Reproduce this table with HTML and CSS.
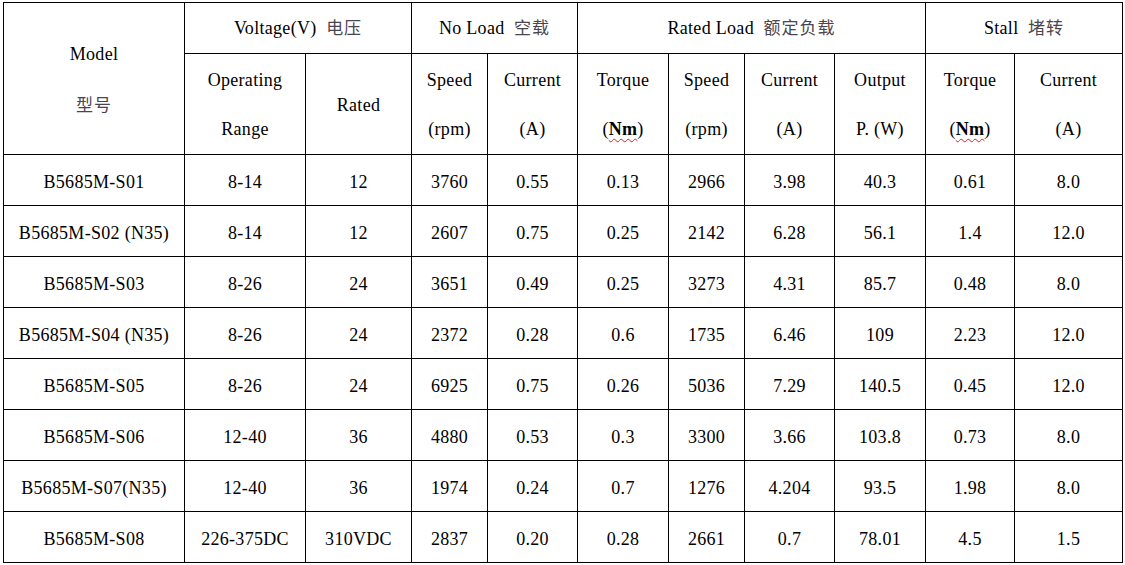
FILE: index.html
```html
<!DOCTYPE html>
<html lang="en">
<head>
<meta charset="utf-8">
<title>B5685M Motor Specifications</title>
<link rel="stylesheet" href="styles.css">
</head>
<body>
<div class="page">
<table class="spec">
  <colgroup>
    <col class="c-model">
    <col class="c-op">
    <col class="c-rated">
    <col class="c-nl-speed">
    <col class="c-nl-cur">
    <col class="c-rl-torque">
    <col class="c-rl-speed">
    <col class="c-rl-cur">
    <col class="c-rl-out">
    <col class="c-st-torque">
    <col class="c-st-cur">
  </colgroup>
  <thead>
    <tr class="head1">
      <th rowspan="2" class="two-line">Model<br><span class="cn">型号</span></th>
      <th colspan="2" class="group">Voltage(V)&nbsp;&nbsp;<span class="cn">电压</span></th>
      <th colspan="2" class="group">No Load&nbsp;&nbsp;<span class="cn">空载</span></th>
      <th colspan="4" class="group">Rated Load&nbsp;&nbsp;<span class="cn">额定负载</span></th>
      <th colspan="2" class="group">Stall&nbsp;&nbsp;<span class="cn">堵转</span></th>
    </tr>
    <tr class="head2">
      <th class="two-line">Operating<br>Range</th>
      <th>Rated</th>
      <th class="two-line">Speed<br>(rpm)</th>
      <th class="two-line">Current<br>(A)</th>
      <th class="two-line">Torque<br>(<b class="spell">Nm</b>)</th>
      <th class="two-line">Speed<br>(rpm)</th>
      <th class="two-line">Current<br>(A)</th>
      <th class="two-line">Output<br>P. (W)</th>
      <th class="two-line">Torque<br>(<b class="spell">Nm</b>)</th>
      <th class="two-line">Current<br>(A)</th>
    </tr>
  </thead>
  <tbody>
    <tr><td>B5685M-S01</td><td>8-14</td><td>12</td><td>3760</td><td>0.55</td><td>0.13</td><td>2966</td><td>3.98</td><td>40.3</td><td>0.61</td><td>8.0</td></tr>
    <tr><td>B5685M-S02 (N35)</td><td>8-14</td><td>12</td><td>2607</td><td>0.75</td><td>0.25</td><td>2142</td><td>6.28</td><td>56.1</td><td>1.4</td><td>12.0</td></tr>
    <tr><td>B5685M-S03</td><td>8-26</td><td>24</td><td>3651</td><td>0.49</td><td>0.25</td><td>3273</td><td>4.31</td><td>85.7</td><td>0.48</td><td>8.0</td></tr>
    <tr><td>B5685M-S04 (N35)</td><td>8-26</td><td>24</td><td>2372</td><td>0.28</td><td>0.6</td><td>1735</td><td>6.46</td><td>109</td><td>2.23</td><td>12.0</td></tr>
    <tr><td>B5685M-S05</td><td>8-26</td><td>24</td><td>6925</td><td>0.75</td><td>0.26</td><td>5036</td><td>7.29</td><td>140.5</td><td>0.45</td><td>12.0</td></tr>
    <tr><td>B5685M-S06</td><td>12-40</td><td>36</td><td>4880</td><td>0.53</td><td>0.3</td><td>3300</td><td>3.66</td><td>103.8</td><td>0.73</td><td>8.0</td></tr>
    <tr><td>B5685M-S07(N35)</td><td>12-40</td><td>36</td><td>1974</td><td>0.24</td><td>0.7</td><td>1276</td><td>4.204</td><td>93.5</td><td>1.98</td><td>8.0</td></tr>
    <tr><td>B5685M-S08</td><td>226-375DC</td><td>310VDC</td><td>2837</td><td>0.20</td><td>0.28</td><td>2661</td><td>0.7</td><td>78.01</td><td>4.5</td><td>1.5</td></tr>
  </tbody>
</table>
</div>
</body>
</html>
```
FILE: styles.css
```css
html, body {
  margin: 0;
  padding: 0;
  background: #ffffff;
}

.page {
  padding: 2px 0 0 3px;
}

.spec {
  border-collapse: collapse;
  table-layout: fixed;
  width: 1120px;
  font-family: "Liberation Serif", "Times New Roman", serif;
  font-size: 18px;
  letter-spacing: 0.3px;
  color: #000000;
}

.spec th,
.spec td {
  border: 1px solid #000000;
  padding: 0;
  text-align: center;
  vertical-align: middle;
  font-weight: normal;
  white-space: nowrap;
  line-height: 20px;
}

.spec td {
  padding-top: 3px;
}

.spec th {
  padding-top: 2px;
}

.spec th.group {
  padding-top: 0;
  padding-bottom: 2px;
}

.c-model { width: 181px; }
.c-op { width: 121px; }
.c-rated { width: 106px; }
.c-nl-speed { width: 76px; }
.c-nl-cur { width: 90px; }
.c-rl-torque { width: 91px; }
.c-rl-speed { width: 76px; }
.c-rl-cur { width: 90px; }
.c-rl-out { width: 91px; }
.c-st-torque { width: 89px; }
.c-st-cur { width: 108px; }

.head1 { height: 51px; }
.head2 { height: 101px; }
.spec tbody tr { height: 51px; }

.spec th.two-line {
  line-height: 49px;
}

.cn {
  font-family: "Noto Sans CJK SC", "Noto Sans CJK TC", sans-serif;
  font-size: 17px;
  color: #4a4650;
  font-weight: normal;
  letter-spacing: 1px;
}

.spell {
  font-weight: bold;
  text-decoration: underline wavy #e02020;
  text-decoration-thickness: 1px;
  text-underline-offset: 3px;
  letter-spacing: 0.3px;
}
```
